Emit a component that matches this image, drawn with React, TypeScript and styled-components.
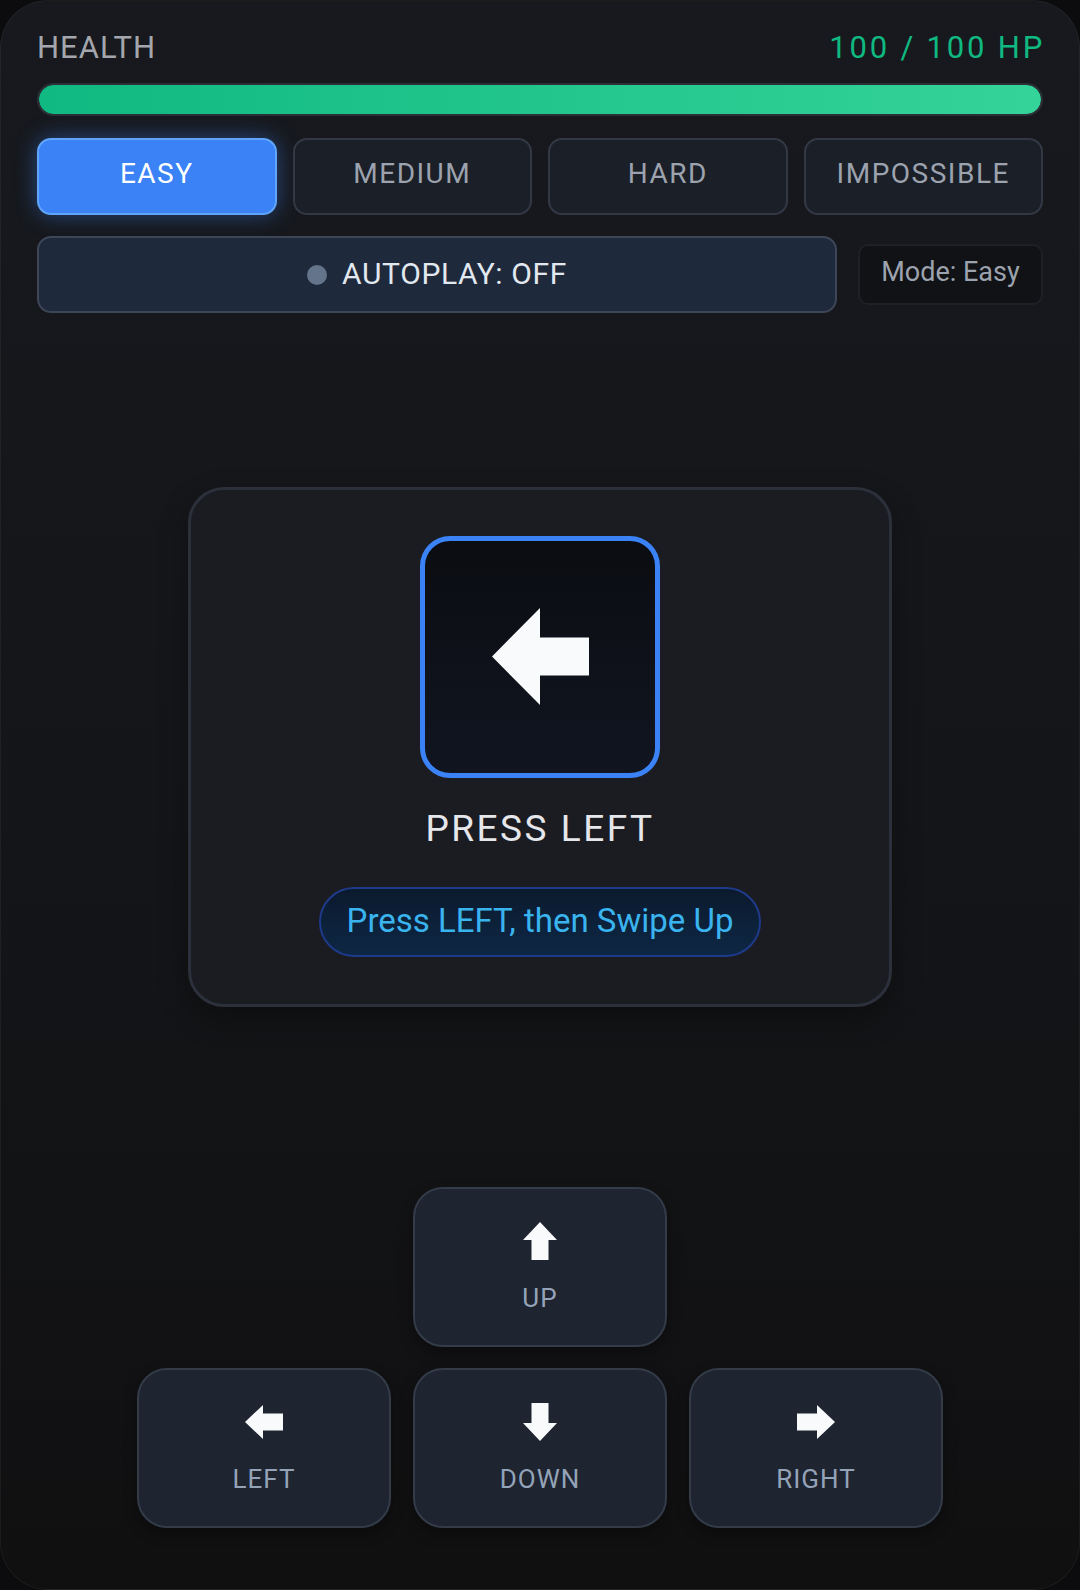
import styled, { createGlobalStyle } from "styled-components";

const GlobalStyle = createGlobalStyle`
  html, body {
    margin: 0;
    padding: 0;
    background: #0c0c0e;
    font-family: Roboto, "Noto Sans", sans-serif;
  }
  * { box-sizing: border-box; }
`;

const Panel = styled.main`
  width: 1080px;
  height: 1590px;
  border-radius: 48px;
  border: 1px solid rgba(255, 255, 255, 0.05);
  background: linear-gradient(180deg, #17191e 0%, #141518 55%, #101011 100%);
  padding: 28px 36px 61px;
  display: flex;
  flex-direction: column;
`;

const Header = styled.div`
  display: flex;
  justify-content: space-between;
  align-items: center;
  height: 36px;
  font-size: 31px;
`;

const Label = styled.span`
  color: #a3a6ad;
  letter-spacing: 1px;
`;

const HpText = styled.span`
  color: #10b981;
  letter-spacing: 2.8px;
  margin-right: -2px;
`;

const Track = styled.div`
  margin-top: 18px;
  height: 33px;
  border-radius: 999px;
  border: 2px solid #2b2f36;
  background: #1f2937;
  overflow: hidden;
`;

const Fill = styled.div`
  height: 100%;
  border-radius: 999px;
  background: linear-gradient(90deg, #10b981 0%, #34d399 100%);
`;

const DiffRow = styled.div`
  margin-top: 22px;
  display: grid;
  grid-template-columns: repeat(4, 1fr);
  gap: 16px;
`;

const DiffButton = styled.button<{ $active?: boolean }>`
  height: 77px;
  border-radius: 14px;
  border: 2px solid ${(p) => (p.$active ? "#60a5fa" : "#333845")};
  background: ${(p) => (p.$active ? "#3b82f6" : "#1b1f28")};
  color: ${(p) => (p.$active ? "#ffffff" : "#9ca3af")};
  box-shadow: ${(p) => (p.$active ? "0 0 22px rgba(59, 130, 246, 0.45)" : "none")};
  font: 400 28px Roboto, sans-serif;
  letter-spacing: 1.5px;
  padding: 0 0 6px;
`;

const ControlRow = styled.div`
  margin-top: 21px;
  display: flex;
  align-items: center;
  gap: 21px;
`;

const AutoplayButton = styled.button`
  flex: 1;
  height: 77px;
  border-radius: 14px;
  border: 2px solid #3d4656;
  background: #1e293b;
  color: #e2e8f0;
  font: 400 30px Roboto, sans-serif;
  letter-spacing: 0.6px;
  display: flex;
  align-items: center;
  justify-content: center;
  gap: 15px;
  padding: 0 0 3px;
`;

const Dot = styled.span`
  width: 20px;
  height: 20px;
  border-radius: 50%;
  background: #64748b;
  margin-top: 3px;
`;

const ModeBadge = styled.div`
  width: 185px;
  height: 61px;
  border-radius: 10px;
  border: 2px solid #1d2025;
  background: #111215;
  color: #9ca3af;
  font-size: 27px;
  display: flex;
  align-items: center;
  justify-content: center;
  padding-bottom: 5px;
`;

const Stage = styled.section`
  flex: 1;
  display: flex;
  align-items: center;
  justify-content: center;
  padding-bottom: 7px;
`;

const Card = styled.div`
  width: 704px;
  height: 520px;
  border-radius: 36px;
  border: 3px solid #2c303a;
  background: #1a1c22;
  box-shadow: 0 12px 30px rgba(0, 0, 0, 0.3);
  padding-top: 46px;
  display: flex;
  flex-direction: column;
  align-items: center;
`;

const KeyBox = styled.div`
  width: 240px;
  height: 242px;
  border-radius: 30px;
  border: 5px solid #3b82f6;
  background: linear-gradient(180deg, #0b0d12 0%, #111520 100%);
  display: flex;
  align-items: center;
  justify-content: center;
`;

const Prompt = styled.div`
  margin-top: 29px;
  font-size: 37px;
  line-height: 44px;
  letter-spacing: 2.5px;
  color: #e5e7eb;
`;

const Hint = styled.div`
  margin-top: 36px;
  height: 70px;
  padding: 0 26px 2px;
  border-radius: 999px;
  border: 2px solid #1e3a8a;
  background: linear-gradient(180deg, #0b1a2e 0%, #0e2744 100%);
  color: #3ab4ef;
  font-size: 33px;
  display: flex;
  align-items: center;
`;

const DPad = styled.div`
  display: grid;
  grid-template-columns: repeat(3, 254px);
  grid-auto-rows: 160px;
  gap: 21px 22px;
  justify-content: center;
`;

const PadButton = styled.button<{ $col: number; $row: number }>`
  grid-column: ${(p) => p.$col};
  grid-row: ${(p) => p.$row};
  border-radius: 30px;
  border: 2px solid #343b49;
  background: #1e2430;
  box-shadow: 0 6px 14px rgba(0, 0, 0, 0.35);
  color: #94a3b8;
  font: 400 26px Roboto, sans-serif;
  letter-spacing: 1px;
  display: flex;
  flex-direction: column;
  align-items: center;
  justify-content: center;
  gap: 23px;
  padding: 0;
`;

const ArrowSvg = styled.svg<{ $turn: number }>`
  display: block;
  transform: rotate(${(p) => p.$turn}deg);
`;

type Dir = "up" | "down" | "left" | "right";
const turns: Record<Dir, number> = { up: 0, right: 90, down: 180, left: -90 };

// arrow drawn pointing up, then turned
function Arrow({ dir, length, breadth, head, shaft }: { dir: Dir; length: number; breadth: number; head: number; shaft: number }) {
  const c = breadth / 2;
  const s = shaft / 2;
  const pts = [
    [c, 0],
    [breadth, head],
    [c + s, head],
    [c + s, length],
    [c - s, length],
    [c - s, head],
    [0, head],
  ]
    .map((p) => p.join(","))
    .join(" ");
  return (
    <ArrowSvg $turn={turns[dir]} width={breadth} height={length} viewBox={`0 0 ${breadth} ${length}`}>
      <polygon points={pts} fill="#f8fafc" />
    </ArrowSvg>
  );
}

const levels = ["EASY", "MEDIUM", "HARD", "IMPOSSIBLE"];

const pads: { dir: Dir; label: string; col: number; row: number }[] = [
  { dir: "up", label: "UP", col: 2, row: 1 },
  { dir: "left", label: "LEFT", col: 1, row: 2 },
  { dir: "down", label: "DOWN", col: 2, row: 2 },
  { dir: "right", label: "RIGHT", col: 3, row: 2 },
];

export default function App() {
  const hp = 100;
  const maxHp = 100;
  return (
    <>
      <GlobalStyle />
      <Panel>
        <Header>
          <Label>HEALTH</Label>
          <HpText>
            {hp} / {maxHp} HP
          </HpText>
        </Header>
        <Track>
          <Fill style={{ width: `${(hp / maxHp) * 100}%` }} />
        </Track>
        <DiffRow>
          {levels.map((l) => (
            <DiffButton key={l} $active={l === "EASY"}>
              {l}
            </DiffButton>
          ))}
        </DiffRow>
        <ControlRow>
          <AutoplayButton>
            <Dot />
            AUTOPLAY: OFF
          </AutoplayButton>
          <ModeBadge>Mode: Easy</ModeBadge>
        </ControlRow>
        <Stage>
          <Card>
            <KeyBox>
              <Arrow dir="left" length={97} breadth={97} head={48} shaft={38} />
            </KeyBox>
            <Prompt>PRESS LEFT</Prompt>
            <Hint>Press LEFT, then Swipe Up</Hint>
          </Card>
        </Stage>
        <DPad>
          {pads.map((p) => (
            <PadButton key={p.label} $col={p.col} $row={p.row}>
              <Arrow dir={p.dir} length={38} breadth={34} head={18} shaft={17} />
              {p.label}
            </PadButton>
          ))}
        </DPad>
      </Panel>
    </>
  );
}
